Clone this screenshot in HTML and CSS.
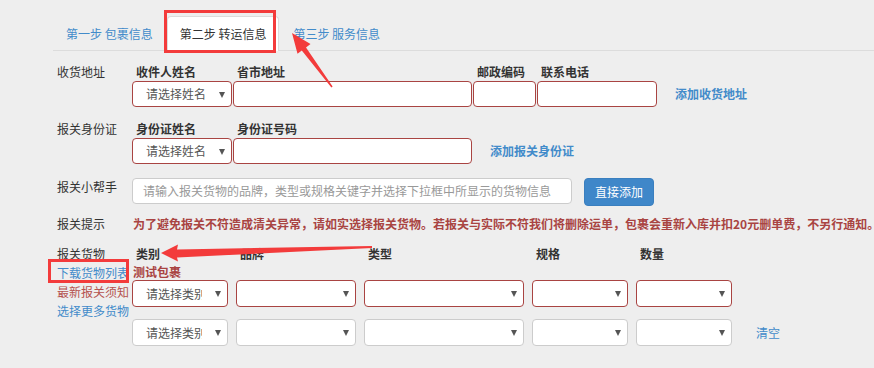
FILE: index.html
```html
<!DOCTYPE html>
<html lang="zh-CN">
<head>
<meta charset="utf-8">
<title>转运信息</title>
<link rel="stylesheet" href="styles.css">
</head>
<body>
<div class="page">
  <div class="tabs">
    <a class="tab">第一步 包裹信息</a>
    <a class="tab active">第二步 转运信息</a>
    <a class="tab">第三步 服务信息</a>
  </div>

  <div class="form">
    <div class="row r1">
      <div class="label">收货地址</div>
      <div class="fields">
        <div class="field">
          <div class="fl">收件人姓名</div>
          <div class="sel err w100"><span class="st">请选择姓名</span><i class="caret"></i></div>
        </div>
        <div class="field">
          <div class="fl">省市地址</div>
          <div class="inp err w239"></div>
        </div>
        <div class="field">
          <div class="fl">邮政编码</div>
          <div class="inp err w63"></div>
        </div>
        <div class="field">
          <div class="fl">联系电话</div>
          <div class="inp err w120"></div>
        </div>
        <a class="link add">添加收货地址</a>
      </div>
    </div>

    <div class="row r2">
      <div class="label">报关身份证</div>
      <div class="fields">
        <div class="field">
          <div class="fl">身份证姓名</div>
          <div class="sel err w100"><span class="st">请选择姓名</span><i class="caret"></i></div>
        </div>
        <div class="field">
          <div class="fl">身份证号码</div>
          <div class="inp err w239"></div>
        </div>
        <a class="link add">添加报关身份证</a>
      </div>
    </div>

    <div class="row r3">
      <div class="label lbl3">报关小帮手</div>
      <div class="inp plain w440"><span class="ph">请输入报关货物的品牌，类型或规格关键字并选择下拉框中所显示的货物信息</span></div>
      <button class="btn">直接添加</button>
    </div>

    <div class="row r4">
      <div class="label">报关提示</div>
      <div class="warn">为了避免报关不符造成清关异常，请如实选择报关货物。若报关与实际不符我们将删除运单，包裹会重新入库并扣20元删单费，不另行通知。</div>
    </div>

    <div class="row r5">
      <div class="side">
        <div>报关货物</div>
        <a class="link">下载货物列表</a>
        <a class="notice">最新报关须知</a>
        <a class="link">选择更多货物</a>
      </div>
      <div class="goods">
        <div class="gh">类别</div>
        <div class="gh">品牌</div>
        <div class="gh">类型</div>
        <div class="gh">规格</div>
        <div class="gh">数量</div>
        <div class="gh"></div>

        <div class="pkg">测试包裹</div>

        <div class="sel err g"><span class="st">请选择类别</span><i class="caret"></i></div>
        <div class="sel err g"><span class="st"></span><i class="caret"></i></div>
        <div class="sel err g"><span class="st"></span><i class="caret"></i></div>
        <div class="sel err g"><span class="st"></span><i class="caret"></i></div>
        <div class="sel err g"><span class="st"></span><i class="caret"></i></div>
        <div></div>

        <div class="sel g g2"><span class="st">请选择类别</span><i class="caret"></i></div>
        <div class="sel g g2"><span class="st"></span><i class="caret"></i></div>
        <div class="sel g g2"><span class="st"></span><i class="caret"></i></div>
        <div class="sel g g2"><span class="st"></span><i class="caret"></i></div>
        <div class="sel g g2"><span class="st"></span><i class="caret"></i></div>
        <a class="link clear g2">清空</a>
      </div>
    </div>
  </div>

  <div class="mark mark1"></div>
  <div class="mark mark2"></div>
  <svg class="arrows" width="874" height="368" viewBox="0 0 874 368">
    <polygon fill="#f33b3b" points="292,33 310.5,44 306,47.5 332.6,86.6 331.4,87.4 301.8,50.6 297.5,53.8"/>
    <polygon fill="#f33b3b" points="161,253 178,244.5 177,249.5 372,246 372,248 177,257.5 178,261.5"/>
  </svg>
</div>
</body>
</html>
```

FILE: styles.css
```css
html, body {
  margin: 0;
  padding: 0;
  background: #eeeeee;
}
body {
  font-family: "Noto Sans CJK SC", "Microsoft YaHei", "Noto Sans", sans-serif;
  font-size: 12px;
  color: #333;
  line-height: 16px;
}
.page {
  position: relative;
  width: 874px;
  height: 368px;
  padding: 16px 0 0 53px;
  box-sizing: border-box;
  overflow: hidden;
}
a { text-decoration: none; cursor: pointer; }

/* tabs */
.tabs {
  display: flex;
  border-bottom: 1px solid #dcdcdc;
  height: 34px;
}
.tab {
  display: block;
  padding: 0 12px;
  line-height: 34px;
  height: 34px;
  border: 1px solid transparent;
  border-bottom: 0;
  margin-right: 1px;
  color: #428bca;
  border-radius: 4px 4px 0 0;
  box-sizing: border-box;
}
.tab.active {
  background: #fff;
  border-color: #dcdcdc;
  color: #333;
  height: 35px;
}

/* form */
.form { padding-left: 4px; }
.row { display: flex; }
.label { width: 75px; flex: none; color: #333; }
.fields { display: flex; gap: 1px; align-items: flex-end; }
.field { display: flex; flex-direction: column; }
.fl { font-weight: bold; padding-left: 4px; margin-bottom: 1px; color: #333; }
.r1 { margin-top: 13px; }
.r2 { margin-top: 14px; }
.r3 { margin-top: 14px; align-items: flex-start; }
.r4 { margin-top: 10px; }
.r5 { margin-top: 12px; }
.lbl3 { padding-top: 1px; }

.inp, .sel {
  height: 26px;
  box-sizing: border-box;
  background: #fff;
  border: 1px solid #ccc;
  border-radius: 4px;
}
.err { border-color: #a94442; }
.w100 { width: 100px; }
.w239 { width: 239px; }
.w63 { width: 63px; }
.w120 { width: 120px; }
.w440 { width: 440px; }

.sel {
  display: flex;
  align-items: center;
  padding: 0 6px 0 13px;
  color: #555;
}
.st {
  flex: 1;
  min-width: 0;
  overflow: hidden;
  white-space: nowrap;
  margin-right: 13px;
}
.caret {
  flex: none;
  width: 0;
  height: 0;
  border-left: 3px solid transparent;
  border-right: 3px solid transparent;
  border-top: 6px solid #555;
  margin-top: 1px;
}
.link { color: #428bca; }
.add {
  font-weight: bold;
  margin-left: 17px;
  line-height: 26px;
}

.plain { border-color: #ccc; display: flex; align-items: center; padding-left: 10px; }
.ph { color: #999; white-space: nowrap; }
.btn {
  margin-left: 12px;
  height: 28px;
  padding: 0 10px;
  background: #3f87c9;
  border: 1px solid #3a7fbf;
  border-radius: 4px;
  color: #fff;
  font-family: inherit;
  font-size: 12px;
  line-height: 26px;
}

.warn {
  color: #a94442;
  font-weight: bold;
  white-space: nowrap;
  margin-left: 1px;
}

/* goods */
.side {
  width: 75px;
  flex: none;
  display: flex;
  flex-direction: column;
  line-height: 19px;
  white-space: nowrap;
}
.side .link, .side .notice { display: block; }
.notice { color: #b5524f; }
.goods {
  display: grid;
  grid-template-columns: 96px 120px 160px 96px 96px auto;
  column-gap: 8px;
  align-items: center;
}
.gh { font-weight: bold; padding-left: 4px; line-height: 19px; }
.pkg {
  grid-column: 1 / -1;
  color: #a94442;
  font-weight: bold;
  line-height: 17px;
  margin-left: 1px;
}
.g { height: 27px; }
.g2 { margin-top: 12px; }
.clear { padding-left: 16px; font-size: 12px; }

/* annotations */
.mark {
  position: absolute;
  border: 3px solid #f33b3b;
  box-sizing: border-box;
}
.mark1 { left: 164px; top: 10px; width: 112px; height: 43px; }
.mark2 { left: 48px; top: 259px; width: 81px; height: 24px; }
.arrows { position: absolute; left: 0; top: 0; pointer-events: none; }
```
